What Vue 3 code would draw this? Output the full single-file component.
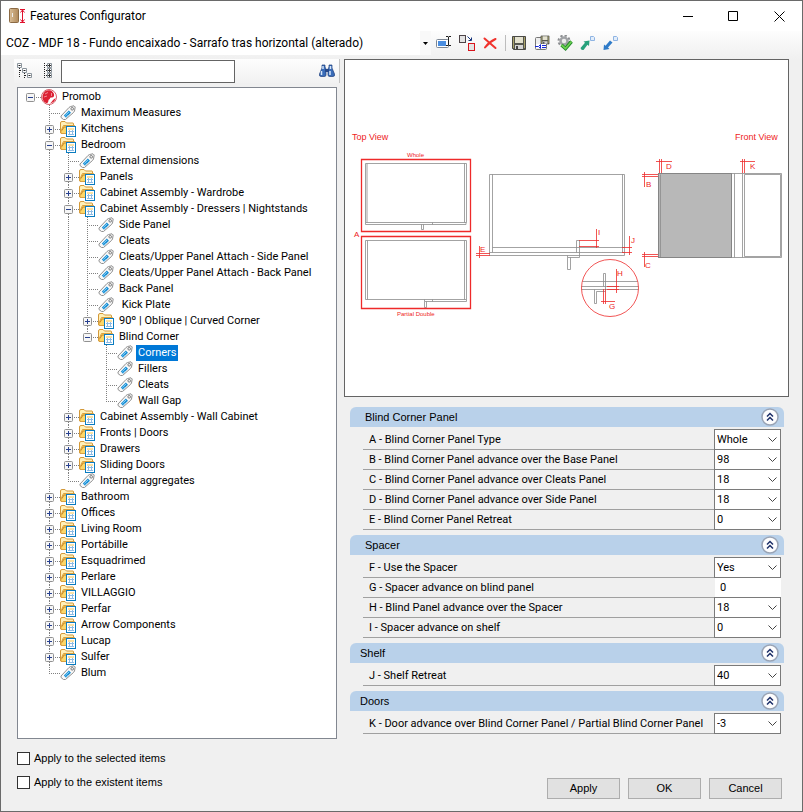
<template>
  <div class="window">
    <svg class="sprite" aria-hidden="true">
      <symbol id="icon-folder" viewBox="0 0 16 16">
        <path d="M.5 12V2Q.5 .5 2 .5H5L6.500 2H13Q13.500 2 13.500 3V6" fill="#fff0b8" stroke="#d3993a" />
        <path d="M1 12.500V10L3.500 4.500H14.500L12 12.500Z" fill="#fcd768" stroke="#d9a040" />
        <path d="M2 9.500L4 6H7" fill="none" stroke="#c98a26" />
        <rect x="6.500" y="5.500" width="9" height="10" fill="#fff" stroke="#0a7cc0" />
        <path d="M8 10.500H14M8 13.500H14M9.500 9V14M12.500 9V14" stroke="#8fbce4" />
        <path d="M8 8H14" stroke="#f8c64a" />
      </symbol>
      <symbol id="icon-tag" viewBox="0 0 16 16">
        <path d="M1 11L9 2.500L10.500 1.500L14 .8L15.200 2L14.500 6L13.500 7.500L5.500 14.500L3.500 14.500L1 12.500Z" fill="#f8f8f8" stroke="#909090" />
        <path d="M3.800 10.500L8.800 5.500L11 7.800L6 12.800Z" fill="#1b90d6" />
        <path d="M5.300 10.500L9 7M6.500 11.500L7.500 10.500" stroke="#8bd0f5" />
        <circle cx="12.200" cy="3.800" r="1.300" fill="#fff" stroke="#777" />
      </symbol>
      <symbol id="icon-brand" viewBox="0 0 16 16">
        <circle cx="8" cy="8" r="7.500" fill="#fff" stroke="#d5606a" />
        <path d="M8.500 1.300A6.800 6.800 0 0 0 5.500 14.300C8.200 13.500 6.800 11 8 10.500C9.500 10 8.500 8.500 10 8.500C12.500 9 13.800 7 12.800 4.500C11.500 2.200 10 1.500 8.500 1.300Z" fill="#dc2032" />
        <path d="M9 14.500C12 14 14.300 12 14.600 9L12 11L10.500 13Z" fill="#dc2032" />
        <path d="M4 5L7 3.500M3 8L6 7M10.500 4V7" stroke="#f3a6ad" stroke-width=".8" />
      </symbol>
      <symbol id="icon-floppy" viewBox="0 0 16 16">
        <path d="M1.500 1.500H14.500V14.500H2.500L1.500 13.500Z" fill="#55564e" stroke="#4a4a46" />
        <rect x="4" y="2" width="8" height="6" fill="#e4e2cf" />
        <path d="M2.500 2V13M13.500 2V13" stroke="#a9a36a" />
        <rect x="4" y="10" width="8" height="4" fill="#d5d5d5" />
        <rect x="5" y="11" width="2" height="3" fill="#444" />
      </symbol>
    </svg>

    <header class="titlebar">
      <svg class="app-icon" viewBox="0 0 17 16" aria-hidden="true">
        <defs>
          <linearGradient id="wood" x2="1">
            <stop offset="0" stop-color="#d9bd96" />
            <stop offset="1" stop-color="#b08a5b" />
          </linearGradient>
        </defs>
        <rect x=".5" y=".5" width="9" height="14" rx="1" fill="url(#wood)" stroke="#8b6a44" />
        <path d="M3.500 5V9" stroke="#eee" />
        <path d="M11 1.500H16M11 14.500H16M13.500 2V14M11.500 4.500L13.500 2L15.500 4.500M11.500 11.500L13.500 14L15.500 11.500" fill="none" stroke="#e0102c" />
      </svg>
      <h1>Features Configurator</h1>
      <div class="caption-buttons">
        <button type="button" aria-label="Minimize">
          <svg viewBox="0 0 11 11"><path d="M1 5.500H11" /></svg>
        </button>
        <button type="button" aria-label="Maximize">
          <svg viewBox="0 0 11 11"><path d="M.5 .5H9.500V9.500H.5Z" /></svg>
        </button>
        <button type="button" aria-label="Close">
          <svg viewBox="0 0 11 11"><path d="M.5 .5L10.500 10.500M10.500 .5L.5 10.500" /></svg>
        </button>
      </div>
    </header>

    <div class="toolbar">
      <div class="profile">
        <select v-model="profile" aria-label="Profile">
          <option>COZ - MDF 18 - Fundo encaixado - Sarrafo tras horizontal (alterado)</option>
        </select>
        <span class="profile-arrow"><svg viewBox="0 0 5 3"><path d="M0 0H5L2.500 3Z" /></svg></span>
      </div>
      <button type="button" class="tool" aria-label="Rename">
        <svg viewBox="0 0 16 16">
          <rect x=".5" y="4.500" width="12" height="8" rx="1" fill="#fff" stroke="#7d8794" />
          <rect x="2" y="6" width="8" height="5" fill="#4b8ee0" />
          <path d="M10 1.500H12L12.500 2L13 1.500H15M12.500 2V10M10 10.500H12L12.500 10L13 10.500H15" fill="none" stroke="#222" />
        </svg>
      </button>
      <button type="button" class="tool" aria-label="Replace">
        <svg viewBox="0 0 16 16">
          <rect x=".5" y=".5" width="6" height="7" fill="#e3e3e3" stroke="#4c4347" />
          <path d="M8.500 1.500L12 5M12.500 2.500V5.500H9.500" fill="none" stroke="#16357d" />
          <rect x="9.500" y="8.500" width="6" height="7" fill="#e3e3e3" stroke="#d8141c" />
        </svg>
      </button>
      <button type="button" class="tool" aria-label="Delete">
        <svg viewBox="0 0 16 16">
          <path d="M2.500 3.500Q6 6.500 13.500 13M13.500 4Q7 7 3 12.500" fill="none" stroke="#f0332d" stroke-width="2" stroke-linecap="round" />
        </svg>
      </button>
      <span class="tool-separator"></span>
      <button type="button" class="tool" aria-label="Save">
        <svg viewBox="0 0 16 16"><use href="#icon-floppy" /></svg>
      </button>
      <button type="button" class="tool" aria-label="Save as">
        <svg viewBox="0 0 16 16">
          <rect x="1.500" y="2.500" width="11" height="12" rx="1" fill="#eee" stroke="#777" />
          <use href="#icon-floppy" x="6" y="0" width="10" height="10" />
          <rect x="2" y="9" width="10" height="4" fill="#fff" />
          <path d="M1 11.500H4M4.500 11.500L6.500 9.500V13.500ZM8 10.500H12M8 12.500H12" fill="none" stroke="#1526d8" />
        </svg>
      </button>
      <button type="button" class="tool" aria-label="Validate">
        <svg viewBox="0 0 16 16">
          <circle cx="7" cy="6" r="5.500" fill="none" stroke="#8b8d90" stroke-width="2" stroke-dasharray="2.300 2" />
          <circle cx="7" cy="6" r="3.500" fill="#eee" stroke="#a0a2a5" stroke-width="2.500" />
          <path d="M4.500 10L8.500 13.500L14.500 6.500" fill="none" stroke="#21862b" stroke-width="3.500" />
          <path d="M4.500 10L8.500 13.500L14.500 6.500" fill="none" stroke="#6bd04f" stroke-width="1.800" />
        </svg>
      </button>
      <button type="button" class="tool" aria-label="Export">
        <svg viewBox="0 0 16 16">
          <path d="M.5 13L5 7.800L3.500 6.500L9.500 5.500L9 11L7.500 9.700L3.500 15Q1 15.500 .5 13Z" fill="#26a17b" />
          <path d="M10.500 1.500H13.500L14.500 2.500V5.500H10.500Z" fill="#e3eefb" stroke="#8fb4e3" />
        </svg>
      </button>
      <button type="button" class="tool" aria-label="Import">
        <svg viewBox="0 0 16 16">
          <path d="M.5 15L1 9.500L2.500 10.800L7 5.500L9.500 7.500L5 12.500L6.500 14Z" fill="#2f7bc8" />
          <path d="M10.500 1.500H13.500L14.500 2.500V5.500H10.500Z" fill="#e3eefb" stroke="#8fb4e3" />
        </svg>
      </button>
    </div>

    <main class="content">
      <section class="explorer">
        <div class="search-bar">
          <button type="button" aria-label="Collapse all" @click="setAll(false)">
            <svg viewBox="0 0 16 16">
              <path d="M2.500 5V15M3 7.500H5M7.500 10V15M8 12.500H10" stroke="#222" stroke-dasharray="1 1" />
              <path d="M.5 .5H4.500V4.500H.5ZM5.500 5.500H9.500V9.500H5.500ZM10.500 10.500H14.500V14.500H10.500Z" fill="#fff" stroke="#8b949c" />
              <path d="M1.500 2.500H3.500M6.500 7.500H8.500M11.500 12.500H13.500" stroke="#222" />
            </svg>
          </button>
          <button type="button" aria-label="Expand all" @click="setAll(true)">
            <svg viewBox="0 0 16 16">
              <path d="M4.500 0V16M6 2.500H7M6 7.500H7M6 12.500H7" stroke="#222" stroke-dasharray="1 1" />
              <path d="M7.500 .5H11.500V4.500H7.500ZM7.500 5.500H11.500V9.500H7.500ZM7.500 10.500H11.500V14.500H7.500Z" fill="#fff" stroke="#8b949c" />
              <path d="M8 2.500H11M8 7.500H11M8 12.500H11M9.500 1V4M9.500 6V9M9.500 11V14" stroke="#333" />
            </svg>
          </button>
          <input v-model="search" type="text" aria-label="Search" />
          <button type="button" class="find" aria-label="Find">
            <svg viewBox="0 0 16 16">
              <path d="M3 2H6V4L7 6V12Q7 13.500 5 13.500H2Q0 13.500 .5 11L3 5ZM13 2H10V4L9 6V12Q9 13.500 11 13.500H14Q16 13.500 15.500 11L13 5Z" fill="#3a6cb8" stroke="#1f3f7d" stroke-width=".7" />
              <rect x="6" y="6" width="4" height="3" fill="#27488a" />
              <path d="M2.500 8V12M4 3V6M11 8V12M11.500 3V6" stroke="#d5e6fa" stroke-width="1.500" />
            </svg>
          </button>
        </div>

        <ul class="tree" role="tree">
          <li
            v-for="row in rows"
            :key="row.id"
            class="tree-row"
            role="treeitem"
            :aria-level="row.guides.length + 1"
            :aria-selected="row.id === selected"
          >
            <svg v-for="(line, i) in row.guides" :key="i" class="guide" viewBox="0 0 19 16">
              <path v-if="line" d="M8.500 0V16" />
            </svg>
            <svg v-if="!row.node.children" class="guide" viewBox="0 0 19 16">
              <path :d="row.last ? 'M8.500 0V9' : 'M8.500 0V16'" />
              <path d="M8 8.500H19" />
            </svg>
            <button
              v-else
              type="button"
              class="expander"
              :aria-label="row.node.open ? 'Collapse' : 'Expand'"
              @click="row.node.open = !row.node.open"
            >
              <svg class="guide" viewBox="0 0 19 16">
                <path v-if="row.guides.length" d="M8.500 0V4" />
                <path v-if="!row.last" d="M8.500 13V16" />
                <path d="M14 8.500H19" />
                <rect x="4.500" y="4.500" width="8" height="8" rx="1" />
                <path class="sign" d="M6 8.500H11" />
                <path v-if="!row.node.open" class="sign" d="M8.500 6V11" />
              </svg>
            </button>
            <svg class="node-icon" viewBox="0 0 16 16"><use :href="iconOf(row)" /></svg>
            <span class="node-label" :class="{ selected: row.id === selected }" @click="selected = row.id">{{ row.node.name }}</span>
          </li>
        </ul>
      </section>

      <section class="details">
        <figure class="preview">
          <svg viewBox="345 60 443 336" role="img" aria-label="Blind corner views">
            <g class="outline">
              <path d="M365.500 163.500H466.500V222.500H365.500ZM367 163.500V222.500M464.500 163.500V222.500M365.500 222.500V224.500H466V222.500M432.500 222.500V224.500M421.500 224.500V229.500H423.500V224.500" />
              <path d="M365.500 240.500H466.500V299.500H365.500ZM367.500 240.500V299.500M464.500 240.500V299.500M424.500 299.500V301.500H466.500V299.500M432.500 299.500V301.500M424.500 301.500V307.500H426.500V301.500" />
              <path d="M489.500 255.500V174.500H624.500V255.500ZM492.500 174.500V252.500M622.500 174.500V252.500M492.500 247.500H624.500M489.500 252.500H624.500" />
              <path d="M576.500 252.500V240.500H579.500V257.500H567.500V269.500H570.500V257.500M567.500 257.500V255.500" />
              <path d="M582.500 281.500H637.500M581.500 286.500H638.500M581.500 289.500H638.500M603.500 286.500V273.500H605.500V289.500M594.500 289.500V303.500H596.500V291.500H605.500" />
            </g>
            <rect x="658.500" y="173.500" width="73" height="84" fill="#b8b8b8" stroke="#858585" />
            <g class="outline">
              <path d="M731.500 173.500H781.500V257.500H731.500M734.500 173.500V257.500M742.500 173.500V257.500M744.500 174.500H780.500V256.500H744.500ZM660.500 174.500V257" />
            </g>
            <g class="mark">
              <path d="M361.500 159.500H470.500V231.500H361.500ZM361.500 236.500H470.500V308.500H361.500Z" stroke-width="1.300" />
              <path d="M476 253.500H490M476 255.500H490M479.500 246V258" />
              <path d="M579 240.500H599M579 246.500H599M596.500 229V248" />
              <path d="M622 247.500H632M622 252.500H632M629.500 236V255" />
              <circle cx="610" cy="288" r="28.500" />
              <path d="M607 286.500H619M607 289.500H619M616.500 269V293" />
              <path d="M601 301.500H615M603.500 289V304M605.500 289V304" />
              <path d="M656 161.500H672M659.500 159V173M661.500 159V173" />
              <path d="M740 161.500H755M742.500 159V173M744.500 159V173" />
              <path d="M642 174.500H658M642 176.500H658M644.500 172V187" />
              <path d="M642 254.500H658M642 256.500H658M644.500 252V267" />
            </g>
            <g class="caption">
              <text class="view" x="352" y="140">Top View</text>
              <text class="view" x="735" y="140">Front View</text>
              <text class="name" x="407" y="157">Whole</text>
              <text class="name" x="397" y="316">Partial Double</text>
              <text x="354" y="237">A</text>
              <text x="480" y="252">E</text>
              <text x="598" y="235">I</text>
              <text x="631" y="243">J</text>
              <text x="617" y="276">H</text>
              <text x="609" y="309">G</text>
              <text x="666" y="169">D</text>
              <text x="750" y="169">K</text>
              <text x="646" y="187">B</text>
              <text x="645" y="268">C</text>
            </g>
          </svg>
        </figure>

        <div class="properties">
          <section v-for="group in groups" :key="group.title" class="group">
            <header class="group-header" :class="{ compact: group.compact }">
              <h2>{{ group.title }}</h2>
              <button type="button" :aria-label="'Toggle ' + group.title" @click="group.open = !group.open">
                <svg viewBox="0 0 18 18">
                  <circle cx="9" cy="9" r="8" fill="#fdfdfe" stroke="#9aa4b5" stroke-width="1.500" />
                  <path d="M6 8.500L9 5.500L12 8.500M6 12.500L9 9.500L12 12.500" fill="none" stroke="#1d2f68" stroke-width="1.500" />
                </svg>
              </button>
            </header>
            <div v-if="group.open" class="fields">
              <div v-for="field in group.fields" :key="field.id" class="field">
                <label :for="field.id">{{ field.label }}</label>
                <input v-if="field.text" :id="field.id" v-model="field.value" type="text" />
                <div v-else class="combo">
                  <select :id="field.id" v-model="field.value">
                    <option>{{ field.value }}</option>
                  </select>
                  <svg viewBox="0 0 9 5"><path d="M.5 .5L4.500 4.500L8.500 .5" /></svg>
                </div>
              </div>
            </div>
          </section>
        </div>
      </section>
    </main>

    <footer class="footer">
      <div class="options">
        <label><input v-model="applySelected" type="checkbox" />Apply to the selected items</label>
        <label><input v-model="applyExistent" type="checkbox" />Apply to the existent items</label>
      </div>
      <div class="actions">
        <button type="button">Apply</button>
        <button type="button">OK</button>
        <button type="button">Cancel</button>
      </div>
    </footer>
  </div>
</template>

<script setup>
import { computed, reactive, ref } from 'vue'

const profile = ref('COZ - MDF 18 - Fundo encaixado - Sarrafo tras horizontal (alterado)')
const search = ref('')
const applySelected = ref(false)
const applyExistent = ref(false)

const leaf = (name) => ({ name })
const folder = (name, children = [], open = false) => ({ name, children, open })

const tree = reactive([
  folder('Promob', [
    leaf('Maximum Measures'),
    folder('Kitchens'),
    folder('Bedroom', [
      leaf('External dimensions'),
      folder('Panels'),
      folder('Cabinet Assembly - Wardrobe'),
      folder('Cabinet Assembly - Dressers | Nightstands', [
        leaf('Side Panel'),
        leaf('Cleats'),
        leaf('Cleats/Upper Panel Attach - Side Panel'),
        leaf('Cleats/Upper Panel Attach - Back Panel'),
        leaf('Back Panel'),
        leaf(' Kick Plate'),
        folder('90º | Oblique | Curved Corner'),
        folder('Blind Corner', [
          leaf('Corners'),
          leaf('Fillers'),
          leaf('Cleats'),
          leaf('Wall Gap')
        ], true)
      ], true),
      folder('Cabinet Assembly - Wall Cabinet'),
      folder('Fronts | Doors'),
      folder('Drawers'),
      folder('Sliding Doors'),
      leaf('Internal aggregates')
    ], true),
    folder('Bathroom'),
    folder('Offices'),
    folder('Living Room'),
    folder('Portábille'),
    folder('Esquadrimed'),
    folder('Perlare'),
    folder('VILLAGGIO'),
    folder('Perfar'),
    folder('Arrow Components'),
    folder('Lucap'),
    folder('Sulfer'),
    leaf('Blum')
  ], true)
])

const selected = ref('/Promob/Bedroom/Cabinet Assembly - Dressers | Nightstands/Blind Corner/Corners')

// guides[i] tells whether the vertical line of level i goes on past this row
function flatten(nodes, guides = [], path = '') {
  return nodes.flatMap((node, i) => {
    const id = path + '/' + node.name
    const last = i === nodes.length - 1
    const row = { id, node, guides, last }
    if (!node.children || !node.open) return [row]
    return [row, ...flatten(node.children, [...guides, !last], id)]
  })
}

const rows = computed(() => flatten(tree))

function iconOf(row) {
  if (!row.guides.length) return '#icon-brand'
  return row.node.children ? '#icon-folder' : '#icon-tag'
}

function setAll(open, nodes = tree) {
  nodes.forEach((node) => {
    if (!node.children) return
    node.open = open
    setAll(open, node.children)
  })
}

const groups = reactive([
  {
    title: 'Blind Corner Panel',
    open: true,
    fields: [
      { id: 'a', label: 'A - Blind Corner Panel Type', value: 'Whole' },
      { id: 'b', label: 'B - Blind Corner Panel advance over the Base Panel', value: '98' },
      { id: 'c', label: 'C - Blind Corner Panel advance over Cleats Panel', value: '18' },
      { id: 'd', label: 'D - Blind Corner Panel advance over Side Panel', value: '18' },
      { id: 'e', label: 'E - Blind Corner Panel Retreat', value: '0' }
    ]
  },
  {
    title: 'Spacer',
    open: true,
    fields: [
      { id: 'f', label: 'F - Use the Spacer', value: 'Yes' },
      { id: 'g', label: 'G - Spacer advance on blind panel', value: '0', text: true },
      { id: 'h', label: 'H - Blind Panel advance over the Spacer', value: '18' },
      { id: 'i', label: 'I - Spacer advance on shelf', value: '0' }
    ]
  },
  {
    title: 'Shelf',
    open: true,
    compact: true,
    fields: [{ id: 'j', label: 'J - Shelf Retreat', value: '40' }]
  },
  {
    title: 'Doors',
    open: true,
    compact: true,
    fields: [
      { id: 'k', label: 'K - Door advance over Blind Corner Panel / Partial Blind Corner Panel', value: '-3' }
    ]
  }
])
</script>

<style>
body {
  background: #f0f0f0;
}
</style>

<style scoped>
.window {
  box-sizing: border-box;
  display: flex;
  flex-direction: column;
  min-height: 100vh;
  border: 1px solid #6a6a6a;
  background: #f0f0f0;
  color: #000;
  font-family: "Liberation Sans", Arial, sans-serif;
  font-size: 11px;
}

.sprite {
  display: none;
}

button,
input,
select {
  box-sizing: border-box;
  margin: 0;
  padding: 0;
  border: none;
  border-radius: 0;
  background: none;
  color: inherit;
  font: inherit;
}

select {
  appearance: none;
}

svg {
  display: block;
}

/* title bar */
.titlebar {
  display: flex;
  align-items: center;
  height: 30px;
  padding-left: 8px;
  background: #fff;
}

.app-icon {
  width: 17px;
  height: 16px;
}

.titlebar h1 {
  flex: 1;
  margin: 0 0 0 4px;
  font: 12px/16px Roboto, sans-serif;
}

.caption-buttons {
  display: flex;
}

.caption-buttons button {
  display: flex;
  align-items: center;
  justify-content: center;
  width: 46px;
  height: 30px;
}

.caption-buttons svg {
  width: 11px;
  height: 11px;
  fill: none;
  stroke: #000;
}

/* main toolbar */
.toolbar {
  display: flex;
  align-items: flex-start;
  height: 28px;
  background: linear-gradient(#fdfdfd, #f0f0f0);
}

.profile {
  display: grid;
  flex: 0 1 430px;
  min-width: 0;
  height: 24px;
  margin-right: 5px;
  background: #fff;
}

.profile select {
  grid-area: 1 / 1;
  width: 100%;
  padding: 0 16px 0 5px;
  font: 12px Roboto, sans-serif;
}

.profile-arrow {
  grid-area: 1 / 1;
  place-self: stretch end;
  display: flex;
  align-items: center;
  justify-content: center;
  width: 11px;
  background: #f9f9f9;
  pointer-events: none;
}

.profile-arrow svg {
  width: 5px;
  height: 3px;
}

.tool {
  flex: none;
  width: 23px;
  height: 24px;
}

.tool svg {
  width: 16px;
  height: 16px;
}

.tool-separator {
  flex: none;
  width: 1px;
  height: 16px;
  margin: 4px 5px 0 0;
  background: #bdbdbd;
}

/* content */
.content {
  flex: 1;
  display: grid;
  grid-template-columns: minmax(0, 326fr) minmax(0, 445fr);
  gap: 4px;
  padding: 0 13px;
}

.explorer {
  display: flex;
  flex-direction: column;
}

.search-bar {
  display: flex;
  align-items: center;
  height: 24px;
  padding: 0 4px 0 3px;
  border-right: 1px solid #c4c4c4;
  background: linear-gradient(#fdfdfd, #f1f1f1);
}

.search-bar svg {
  width: 16px;
  height: 16px;
}

.search-bar button {
  margin-right: 7px;
}

.search-bar input {
  flex: 0 1 174px;
  min-width: 0;
  height: 23px;
  margin-right: auto;
  margin-left: -2px;
  padding: 0 4px;
  border: 1px solid #646464;
  background: #fff;
}

.search-bar .find {
  margin-right: 0;
}

/* tree */
.tree {
  flex: 1;
  margin: 4px 3px 0;
  padding: 1px 4px 20px;
  border: 1px solid #828790;
  background: #fff;
  font-family: Roboto, sans-serif;
  list-style: none;
}

.tree-row {
  display: flex;
  height: 16px;
  white-space: pre;
}

.guide {
  flex: none;
  width: 19px;
  height: 16px;
  fill: none;
  stroke: #808080;
}

.guide path:not(.sign) {
  stroke-dasharray: 1 1;
}

.guide rect {
  fill: #f6f6f6;
  stroke: #919191;
}

.guide .sign {
  stroke: #27408f;
}

.expander,
.node-icon {
  flex: none;
}

.node-icon {
  width: 16px;
  height: 16px;
  margin-right: 3px;
}

.node-label {
  padding: 0 2px;
  line-height: 16px;
  cursor: default;
}

.node-label.selected {
  background: #0078d7;
  color: #fff;
}

/* preview */
.preview {
  margin: 0;
  border: 1px solid #646464;
  background: #fff;
}

.preview svg {
  width: 100%;
}

.outline {
  fill: none;
  stroke: #8c8c8c;
  stroke-width: 0.8;
}

.mark {
  fill: none;
  stroke: #ee2a2a;
  stroke-width: 0.8;
}

.caption {
  fill: #ee1c1c;
  font-size: 8px;
}

.caption .view {
  font-size: 9px;
}

.caption .name {
  font-size: 6px;
}

/* properties */
.properties {
  padding: 10px 5px 0 6px;
}

.group {
  margin-bottom: 6px;
}

.group-header {
  display: flex;
  align-items: center;
  justify-content: space-between;
  height: 20px;
  padding: 0 5px 0 15px;
  border-radius: 6px 6px 0 0;
  background: #b9d1ea;
}

.group-header.compact {
  padding-left: 10px;
}

.group-header h2 {
  margin: 0;
  font-size: 11px;
  font-weight: normal;
}

.group-header svg {
  width: 18px;
  height: 18px;
}

.fields {
  padding: 3px 3px 0 13px;
  margin-bottom: -1px;
  font-family: Roboto, sans-serif;
}

.field {
  display: flex;
  height: 20px;
}

.field label {
  flex: 1;
  min-width: 0;
  padding-left: 6px;
  border-bottom: 1px solid #a0a0a0;
  line-height: 20px;
  white-space: nowrap;
}

.combo {
  display: grid;
  flex: none;
  width: 67px;
  height: 21px;
  margin-top: -1px;
}

.combo select {
  grid-area: 1 / 1;
  width: 100%;
  padding: 0 16px 1px 2px;
  border: 1px solid #7a7a7a;
  background: #fff;
}

.combo svg {
  grid-area: 1 / 1;
  place-self: center end;
  width: 9px;
  height: 5px;
  margin-right: 4px;
  fill: none;
  stroke: #444;
  pointer-events: none;
}

.field input {
  width: 66px;
  height: 19px;
  padding: 0 5px;
  background: #fff;
}

/* footer */
.footer {
  display: flex;
  align-items: flex-end;
  justify-content: space-between;
  padding: 13px 20px 12px 16px;
}

.options {
  display: flex;
  flex-direction: column;
  gap: 11px;
  padding-bottom: 10px;
}

.options label {
  display: flex;
  align-items: center;
  gap: 4px;
  height: 13px;
  line-height: 11px;
}

.options input {
  appearance: none;
  width: 13px;
  height: 13px;
  border: 1px solid #333;
  background: #fff;
}

.options input:checked {
  background: #0078d7;
}

.actions {
  display: flex;
  gap: 8px;
}

.actions button {
  width: 73px;
  height: 21px;
  padding-bottom: 2px;
  border: 1px solid #adadad;
  background: #e1e1e1;
}
</style>
